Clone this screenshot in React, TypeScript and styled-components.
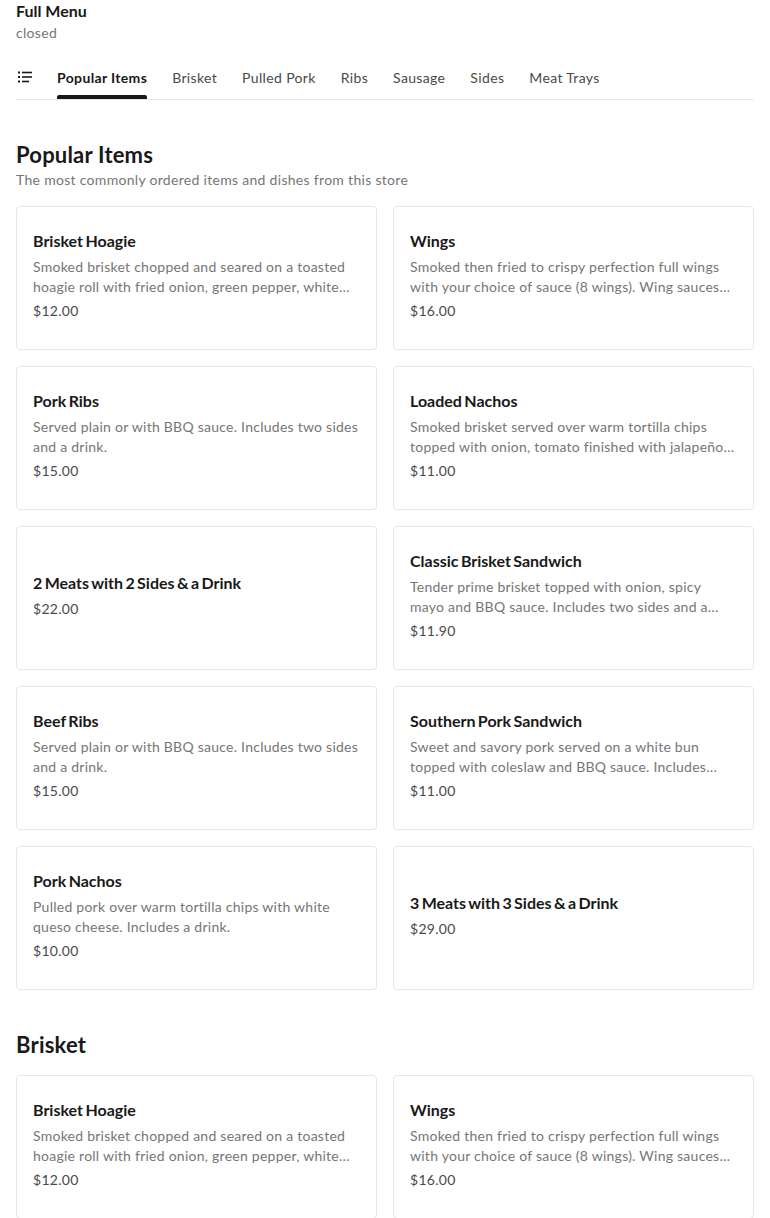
import React from 'react';
import styled, { createGlobalStyle } from 'styled-components';

const GlobalStyle = createGlobalStyle`
  body {
    margin: 0;
    background: #ffffff;
    font-family: Lato, "Liberation Sans", sans-serif;
    color: #191919;
  }
`;

const Page = styled.div`
  padding: 0 16px;
`;

const Header = styled.header`
  display: flex;
  flex-direction: column;
`;

const StoreTitle = styled.h1`
  margin: 0;
  font-size: 16px;
  line-height: 22px;
  font-weight: 700;
`;

const Status = styled.span`
  font-size: 14px;
  line-height: 20px;
  color: #767676;
  margin-top: 1px;
  letter-spacing: 0.3px;
`;

const TabBar = styled.nav`
  display: flex;
  align-items: stretch;
  gap: 25px;
  margin-top: 12px;
  height: 44px;
  border-bottom: 1px solid #e7e7e7;
`;

const IconTab = styled.div`
  display: flex;
  align-items: center;
  margin-right: -1px;
  padding-left: 1px;
`;

const Tab = styled.div<{ $active?: boolean }>`
  position: relative;
  display: flex;
  align-items: center;
  font-size: 14px;
  font-weight: ${(p) => (p.$active ? 700 : 400)};
  color: ${(p) => (p.$active ? '#191919' : '#494949')};
  letter-spacing: 0.35px;
  white-space: nowrap;

  &::after {
    content: '';
    display: ${(p) => (p.$active ? 'block' : 'none')};
    position: absolute;
    left: 0;
    right: 0;
    bottom: 0;
    height: 4px;
    border-radius: 2px 2px 0 0;
    background: #191919;
  }
`;

const Section = styled.section`
  padding-top: 41px;
`;

const SectionTitle = styled.h2`
  margin: 0;
  font-size: 22px;
  line-height: 28px;
  font-weight: 700;
  letter-spacing: 0.2px;
`;

const SectionSub = styled.p`
  margin: 1px 0 0;
  font-size: 14px;
  line-height: 20px;
  color: #767676;
  letter-spacing: 0.3px;
`;

const Grid = styled.div`
  display: grid;
  grid-template-columns: 1fr 1fr;
  gap: 16px;
  margin-top: 16px;
`;

const Card = styled.div`
  box-sizing: border-box;
  height: 144px;
  border: 1px solid #e7e7e7;
  border-radius: 4px;
  padding: 0 16px 5px;
  display: flex;
  flex-direction: column;
  justify-content: center;
`;

const ItemName = styled.div`
  font-size: 16px;
  line-height: 22px;
  font-weight: 700;
  word-spacing: -1.5px;
  margin-bottom: 5px;
`;

const ItemDesc = styled.div`
  margin-bottom: 4px;
  font-size: 14px;
  line-height: 20px;
  color: #767676;
  letter-spacing: 0.25px;
  display: -webkit-box;
  -webkit-line-clamp: 2;
  -webkit-box-orient: vertical;
  overflow: hidden;
`;

const ItemPrice = styled.div`
  font-size: 14px;
  line-height: 20px;
  color: #494949;
  letter-spacing: 0.3px;
`;

const ListIcon = () => (
  <svg width="16" height="16" viewBox="0 0 16 16" fill="#191919">
    <rect x="1" y="2.5" width="2" height="2" />
    <rect x="5" y="2.7" width="10" height="1.6" />
    <rect x="1" y="7" width="2" height="2" />
    <rect x="5" y="7.2" width="10" height="1.6" />
    <rect x="1" y="11.5" width="2" height="2" />
    <rect x="5" y="11.7" width="7" height="1.6" />
  </svg>
);

type Item = { name: string; desc?: string; price: string };

const popular: Item[] = [
  {
    name: 'Brisket Hoagie',
    desc: 'Smoked brisket chopped and seared on a toasted hoagie roll with fried onion, green pepper, white…',
    price: '$12.00',
  },
  {
    name: 'Wings',
    desc: 'Smoked then fried to crispy perfection full wings with your choice of sauce (8 wings). Wing sauces…',
    price: '$16.00',
  },
  {
    name: 'Pork Ribs',
    desc: 'Served plain or with BBQ sauce. Includes two sides and a drink.',
    price: '$15.00',
  },
  {
    name: 'Loaded Nachos',
    desc: 'Smoked brisket served over warm tortilla chips topped with onion, tomato finished with jalapeño…',
    price: '$11.00',
  },
  { name: '2 Meats with 2 Sides & a Drink', price: '$22.00' },
  {
    name: 'Classic Brisket Sandwich',
    desc: 'Tender prime brisket topped with onion, spicy mayo and BBQ sauce. Includes two sides and a…',
    price: '$11.90',
  },
  {
    name: 'Beef Ribs',
    desc: 'Served plain or with BBQ sauce. Includes two sides and a drink.',
    price: '$15.00',
  },
  {
    name: 'Southern Pork Sandwich',
    desc: 'Sweet and savory pork served on a white bun topped with coleslaw and BBQ sauce. Includes…',
    price: '$11.00',
  },
  {
    name: 'Pork Nachos',
    desc: 'Pulled pork over warm tortilla chips with white queso cheese. Includes a drink.',
    price: '$10.00',
  },
  { name: '3 Meats with 3 Sides & a Drink', price: '$29.00' },
];

const brisket: Item[] = [popular[0], popular[1]];

const tabs = ['Popular Items', 'Brisket', 'Pulled Pork', 'Ribs', 'Sausage', 'Sides', 'Meat Trays'];

const MenuCard = ({ item }: { item: Item }) => (
  <Card>
    <ItemName>{item.name}</ItemName>
    {item.desc && <ItemDesc>{item.desc}</ItemDesc>}
    <ItemPrice>{item.price}</ItemPrice>
  </Card>
);

const App = () => (
  <Page>
    <GlobalStyle />
    <Header>
      <StoreTitle>Full Menu</StoreTitle>
      <Status>closed</Status>
    </Header>
    <TabBar>
      <IconTab>
        <ListIcon />
      </IconTab>
      {tabs.map((t, i) => (
        <Tab key={t} $active={i === 0}>
          {t}
        </Tab>
      ))}
    </TabBar>
    <Section>
      <SectionTitle>Popular Items</SectionTitle>
      <SectionSub>The most commonly ordered items and dishes from this store</SectionSub>
      <Grid>
        {popular.map((item, i) => (
          <MenuCard key={`pop-${i}`} item={item} />
        ))}
      </Grid>
    </Section>
    <Section>
      <SectionTitle>Brisket</SectionTitle>
      <Grid>
        {brisket.map((item, i) => (
          <MenuCard key={`bri-${i}`} item={item} />
        ))}
      </Grid>
    </Section>
  </Page>
);

export default App;
